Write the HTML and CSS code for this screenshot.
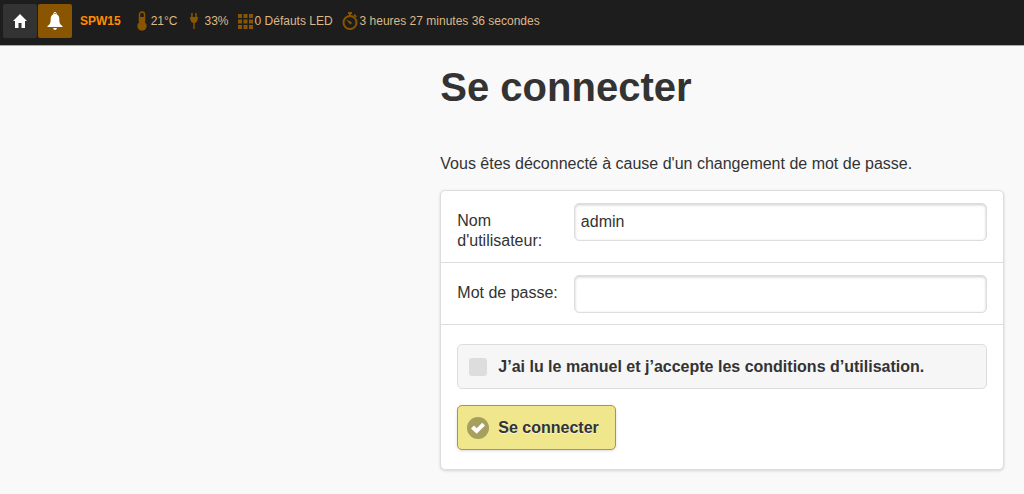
FILE: index.html
```
<!DOCTYPE html>
<html lang="fr">
<head>
    <meta charset="UTF-8">
    <meta name="viewport" content="width=device-width, initial-scale=1.0">
    <title>Se connecter</title>
    <link rel="stylesheet" href="styles.css">
</head>
<body>
    <header class="topbar">
        <nav class="topbar-buttons">
            <a class="nav-button" href="#" aria-label="Accueil">
                <svg width="14" height="14" viewBox="0 0 14 14"><path d="M7 0L0 7h2v7h3.500V9h3v5H12V7h2z" fill="#fff"/></svg>
            </a>
            <a class="nav-button alert" href="#" aria-label="Alarmes">
                <svg width="16" height="18" viewBox="0 0 16 18">
                    <circle cx="8" cy="1.800" r="1.300" fill="none" stroke="#fff"/>
                    <path d="M8 2C5 2 3.700 4.500 3.700 7c0 4-.8 5.500-3.200 7v1h15v-1c-2.400-1.500-3.200-3-3.200-7 0-2.500-1.300-5-4.300-5z" fill="#fff"/>
                    <path d="M6 16h4q-.5 2-2 2t-2-2z" fill="#fff"/>
                </svg>
            </a>
        </nav>
        <a class="device" href="#">SPW15</a>
        <ul class="status">
            <li class="temperature">
                <svg width="10" height="20" viewBox="0 0 10 20">
                    <path d="M2.500 11V3.500a2.500 2.500 0 0 1 5 0V11" fill="none" stroke="#8a5500" stroke-width="1.500"/>
                    <path d="M3 6h4v5.500H3z" fill="#8a5500"/>
                    <circle cx="5" cy="15" r="4.700" fill="#8a5500"/>
                </svg>
                21°C
            </li>
            <li class="power">
                <svg width="8" height="16" viewBox="0 0 8 16"><path d="M1.200 0h1.500v4h2.600V0h1.500v4H8v1.500H7.700C7.700 8 6.500 9.500 4.700 10v6H3.300v-6C1.500 9.500.3 8 .3 5.500H0V4h1.200z" fill="#8a5500"/></svg>
                33%
            </li>
            <li class="leds">
                <svg width="15" height="15" viewBox="0 0 15 15"><path d="M0 0h4v4H0zM5.500 0h4v4h-4zM11 0h4v4h-4zM0 5.500h4v4H0zM5.500 5.500h4v4h-4zM11 5.500h4v4h-4zM0 11h4v4H0zM5.500 11h4v4h-4zM11 11h4v4h-4z" fill="#8a5500"/></svg>
                0 Défauts LED
            </li>
            <li class="uptime">
                <svg width="16" height="18" viewBox="0 0 16 18">
                    <circle cx="8" cy="10.500" r="6.500" fill="none" stroke="#8a5500" stroke-width="2"/>
                    <path d="M6 0h4v2H9v2H7V2H6zM12.500 2l2.500 2.200-1.200 1.300-2.500-2.200z" fill="#8a5500"/>
                    <path d="M4 7.500l5 2.300a1.200 1.200 0 1 1-1.600 1.600z" fill="#8a5500"/>
                </svg>
                3 heures 27 minutes 36 secondes
            </li>
        </ul>
    </header>

    <main class="content">
        <h1>Se connecter</h1>
        <p class="message">Vous êtes déconnecté à cause d'un changement de mot de passe.</p>
        <form class="login">
            <div class="field">
                <label for="username">Nom d'utilisateur:</label>
                <input type="text" id="username" name="username" value="admin">
            </div>
            <div class="field">
                <label for="password">Mot de passe:</label>
                <input type="password" id="password" name="password">
            </div>
            <div class="actions">
                <label class="terms" for="terms">
                    <input type="checkbox" id="terms" name="terms">
                    J’ai lu le manuel et j’accepte les conditions d’utilisation.
                </label>
                <button class="submit" type="submit">
                    <svg width="22" height="22" viewBox="0 0 22 22">
                        <circle cx="11" cy="11" r="11" fill="#a79f5e"/>
                        <path d="M4 11.500l3-3 2.700 2.700L15.200 5.700l2.800 2.800-8.300 8.300z" fill="#fff"/>
                    </svg>
                    Se connecter
                </button>
            </div>
        </form>
    </main>
</body>
</html>
```

FILE: styles.css
```
* {
    box-sizing: border-box;
}

body {
    margin: 0;
    font-family: "Liberation Sans", Arial, sans-serif;
    font-size: 16px;
    line-height: 20px;
    color: #333;
    background-color: #f9f9f9;
}

svg {
    display: block;
    flex-shrink: 0;
}

.topbar {
    display: flex;
    align-items: center;
    padding: 4px 3px 7px;
    background-color: #1d1d1d;
    border-bottom: 1px solid #aaa;
    font-size: 12px;
}

.topbar-buttons {
    display: flex;
    gap: 1px;
}

.nav-button {
    display: flex;
    align-items: center;
    justify-content: center;
    width: 34px;
    height: 34px;
    background-color: #333;
    border-radius: 2px;
}

.nav-button.alert {
    background-color: #8a5500;
}

.device {
    margin-left: 8px;
    color: #ff8c00;
    font-weight: bold;
    text-decoration: none;
}

.status {
    display: flex;
    gap: 9px;
    margin: 0 0 0 16px;
    padding: 0;
    list-style: none;
    color: #deb887;
}

.status li {
    display: flex;
    align-items: center;
    white-space: nowrap;
}

.status .temperature {
    gap: 4px;
    margin-right: 3px;
}

.status .power {
    gap: 7px;
}

.status .leds,
.status .uptime {
    gap: 2px;
}

.content {
    padding: 17px 20px 24px 43%;
}

h1 {
    margin: 0;
    font-size: 40px;
    line-height: 48px;
}

.message {
    margin: 43px 0 16px;
}

.login {
    background-color: #fff;
    border: 1px solid #ddd;
    border-radius: 5px;
    box-shadow: 0 1px 3px rgba(0, 0, 0, 0.15);
}

.field {
    display: flex;
    align-items: flex-start;
    padding: 12px 16px 11px;
    border-bottom: 1px solid #ddd;
}

.field label {
    width: 22%;
    padding: 8px 16px 0 0;
}

.field input {
    flex: 1;
    min-width: 0;
    height: 38px;
    padding: 0 6px;
    font: inherit;
    color: #333;
    background-color: #fff;
    border: 1px solid #ddd;
    border-radius: 5px;
    box-shadow: inset 0 1px 3px rgba(0, 0, 0, 0.2);
}

.actions {
    padding: 19px 16px;
}

.terms,
.submit {
    display: flex;
    align-items: center;
    height: 45px;
    border: 1px solid #ddd;
    border-radius: 5px;
    font-weight: bold;
}

.terms {
    gap: 11px;
    padding: 0 11px;
    background-color: #f6f6f6;
}

.terms input {
    appearance: none;
    width: 18px;
    height: 18px;
    margin: 0;
    background-color: #ddd;
    border-radius: 3px;
}

.submit {
    gap: 9px;
    margin-top: 16px;
    padding: 0 16px 0 9px;
    font-family: inherit;
    font-size: 16px;
    color: #333;
    background-color: #f0e68c;
    border-color: #d9803c;
    box-shadow: 0 1px 3px rgba(0, 0, 0, 0.15);
    text-shadow: 0 1px 0 #f3f3f3;
    cursor: pointer;
}
```
